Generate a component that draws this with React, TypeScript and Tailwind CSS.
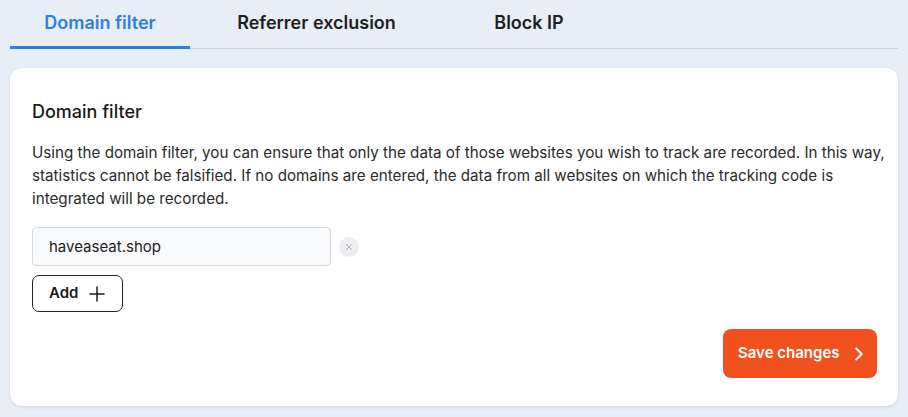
import React, { useState } from 'react';
import { ChevronRight, Plus, X } from 'lucide-react';

type TabKey = 'domain' | 'referrer' | 'ip';

const tabs: { key: TabKey; label: string; width: string }[] = [
  { key: 'domain', label: 'Domain filter', width: 'w-[180px]' },
  { key: 'referrer', label: 'Referrer exclusion', width: 'w-[253px]' },
  { key: 'ip', label: 'Block IP', width: 'w-[172px]' },
];

export default function App() {
  const [active, setActive] = useState<TabKey>('domain');
  const [domains, setDomains] = useState<string[]>(['haveaseat.shop']);

  return (
    <div className="min-h-[417px] bg-[#e8eef7] px-[10px] pb-[11px] pt-[1px] text-[#222] [font-family:Inter,'Noto_Sans',sans-serif]">
      <div className="flex border-b border-[#c9d1dc]">
        {tabs.map((tab) => (
          <button
            key={tab.key}
            onClick={() => setActive(tab.key)}
            className={`${tab.width} -mb-px flex h-[48px] items-center justify-center border-b-[3px] pb-[2px] text-[18px] font-semibold ${
              active === tab.key ? 'border-[#2f7fdf] text-[#2f7fdf]' : 'border-transparent text-[#1f1f1f]'
            }`}
          >
            {tab.label}
          </button>
        ))}
      </div>

      <div className="mt-[19px] rounded-[12px] bg-white pb-[28px] pl-[22px] pr-[10px] pt-[32px] shadow-[0_1px_3px_rgba(30,50,80,0.12)]">
        <h2 className="text-[18px] font-medium leading-[24px] text-[#1a1a1a]">Domain filter</h2>
        <p className="mt-[17px] text-[15.2px] leading-[23px] text-[#2b2b2b]">
          Using the domain filter, you can ensure that only the data of those websites you wish to track are recorded. In this way,
          statistics cannot be falsified. If no domains are entered, the data from all websites on which the tracking code is
          integrated will be recorded.
        </p>

        <div className="mt-[17px] flex flex-col gap-[9px]">
          {domains.map((d, i) => (
            <div key={i} className="flex items-center gap-[8px]">
              <input
                value={d}
                onChange={(e) => setDomains(domains.map((x, j) => (j === i ? e.target.value : x)))}
                className="h-[39px] w-[299px] rounded-[4px] border border-[#d6d9de] bg-[#f9fafb] px-[16px] text-[15px] text-[#222] outline-none"
              />
              <button
                onClick={() => setDomains(domains.filter((_, j) => j !== i))}
                className="flex h-[20px] w-[20px] items-center justify-center rounded-full bg-[#eceef1] text-[#8a8f97]"
              >
                <X className="h-[10px] w-[10px]" strokeWidth={1.75} />
              </button>
            </div>
          ))}
          <button
            onClick={() => setDomains([...domains, ''])}
            className="flex h-[37px] w-[91px] items-center gap-[7px] rounded-[7px] border border-[#222] pl-[16px] text-[15px] font-semibold text-[#1a1a1a]"
          >
            Add
            <Plus className="h-[24px] w-[24px]" strokeWidth={1.5} />
          </button>
        </div>

        <div className="mr-[11px] mt-[17px] flex justify-end">
          <button className="flex h-[49px] w-[154px] items-center gap-[8px] rounded-[8px] bg-[#f0511e] pl-[15px] text-[15px] font-semibold text-white">
            Save changes
            <ChevronRight className="h-[22px] w-[22px]" strokeWidth={2.25} />
          </button>
        </div>
      </div>
    </div>
  );
}
